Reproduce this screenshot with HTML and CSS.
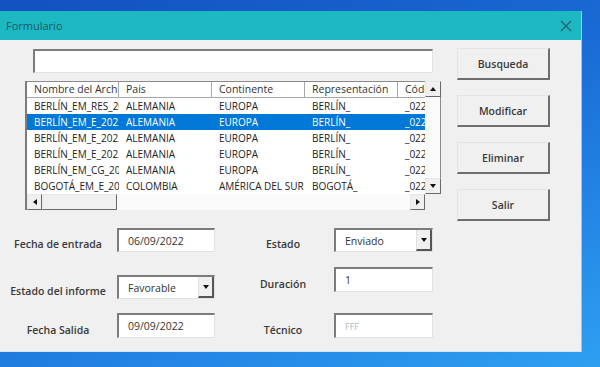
FILE: index.html
```html
<!DOCTYPE html>
<html lang="es">
<head>
    <meta charset="UTF-8">
    <meta name="viewport" content="width=device-width, initial-scale=1.0">
    <title>Formulario</title>
    <link rel="stylesheet" href="styles.css">
</head>
<body>
    <div class="window">
        <!-- Title bar -->
        <div class="titlebar">
            <span class="title">Formulario</span>
            <svg class="close" width="12" height="12" viewBox="0 0 12 12">
                <path d="M1 1 L11 11 M11 1 L1 11" stroke="#2b5f6b" stroke-width="1.3" fill="none"/>
            </svg>
        </div>

        <div class="content">
            <div class="top">
                <div class="left">
                    <div class="search"></div>

                    <!-- ListBox -->
                    <div class="list">
                        <div class="list-body">
                            <div class="row header">
                                <div class="cell">Nombre del Archivo</div>
                                <div class="cell">Pais</div>
                                <div class="cell">Continente</div>
                                <div class="cell">Representación</div>
                                <div class="cell">Código</div>
                            </div>
                            <div class="row">
                                <div class="cell">BERLÍN_EM_RES_2022</div>
                                <div class="cell">ALEMANIA</div>
                                <div class="cell">EUROPA</div>
                                <div class="cell">BERLÍN_</div>
                                <div class="cell">_022</div>
                            </div>
                            <div class="row selected">
                                <div class="cell">BERLÍN_EM_E_2022</div>
                                <div class="cell">ALEMANIA</div>
                                <div class="cell">EUROPA</div>
                                <div class="cell">BERLÍN_</div>
                                <div class="cell">_022</div>
                            </div>
                            <div class="row">
                                <div class="cell">BERLÍN_EM_E_2022</div>
                                <div class="cell">ALEMANIA</div>
                                <div class="cell">EUROPA</div>
                                <div class="cell">BERLÍN_</div>
                                <div class="cell">_022</div>
                            </div>
                            <div class="row">
                                <div class="cell">BERLÍN_EM_E_2022</div>
                                <div class="cell">ALEMANIA</div>
                                <div class="cell">EUROPA</div>
                                <div class="cell">BERLÍN_</div>
                                <div class="cell">_022</div>
                            </div>
                            <div class="row">
                                <div class="cell">BERLÍN_EM_CG_2022</div>
                                <div class="cell">ALEMANIA</div>
                                <div class="cell">EUROPA</div>
                                <div class="cell">BERLÍN_</div>
                                <div class="cell">_022</div>
                            </div>
                            <div class="row">
                                <div class="cell">BOGOTÁ_EM_E_2022</div>
                                <div class="cell">COLOMBIA</div>
                                <div class="cell">AMÉRICA DEL SUR</div>
                                <div class="cell">BOGOTÁ_</div>
                                <div class="cell">_022</div>
                            </div>
                        </div>

                        <div class="vscroll">
                            <div class="sbtn"><span class="arrow up"></span></div>
                            <div class="track"></div>
                            <div class="sbtn"><span class="arrow down"></span></div>
                        </div>

                        <div class="hscroll">
                            <div class="sbtn"><span class="arrow left"></span></div>
                            <div class="thumb"></div>
                            <div class="track"></div>
                            <div class="sbtn"><span class="arrow right"></span></div>
                        </div>

                        <div class="corner"></div>
                    </div>
                </div>

                <div class="buttons">
                    <div class="btn">Busqueda</div>
                    <div class="btn">Modificar</div>
                    <div class="btn">Eliminar</div>
                    <div class="btn">Salir</div>
                </div>
            </div>

            <!-- Form fields -->
            <div class="form">
                <div class="group group-left">
                    <div class="field">
                        <div class="label">Fecha de entrada</div>
                        <div class="input">06/09/2022</div>
                    </div>
                    <div class="field">
                        <div class="label">Estado del informe</div>
                        <div class="input combo">
                            <span>Favorable</span>
                            <div class="drop"><span class="arrow down"></span></div>
                        </div>
                    </div>
                    <div class="field">
                        <div class="label">Fecha Salida</div>
                        <div class="input">09/09/2022</div>
                    </div>
                </div>

                <div class="group group-right">
                    <div class="field">
                        <div class="label">Estado</div>
                        <div class="input combo">
                            <span>Enviado</span>
                            <div class="drop"><span class="arrow down"></span></div>
                        </div>
                    </div>
                    <div class="field">
                        <div class="label">Duración</div>
                        <div class="input">1</div>
                    </div>
                    <div class="field">
                        <div class="label">Técnico</div>
                        <div class="input muted">FFF</div>
                    </div>
                </div>
            </div>
        </div>
    </div>
</body>
</html>
```

FILE: styles.css
```css
body {
    margin: 0;
    width: 600px;
    height: 367px;
    overflow: hidden;
    font-family: "Open Sans", "Liberation Sans", sans-serif;
    background: linear-gradient(160deg, #1350c0 0%, #1a6cd6 45%, #2488e6 75%, #2ea0f0 100%);
    padding-top: 11px;
    box-sizing: border-box;
}
.window {
    width: 582px;
    height: 341px;
    background-color: #f0f0f0;
    border-right: 1px solid #9cc4e4;
    border-bottom: 1px solid #d8e6f2;
    box-sizing: border-box;
}
.titlebar {
    height: 29px;
    background-color: #1cb9c3;
    display: flex;
    align-items: center;
    justify-content: space-between;
    padding: 0 9px 0 6px;
}
.title {
    font-size: 11px;
    color: #1c5868;
}
.content {
    padding-top: 9px;
}
.top {
    display: flex;
    align-items: flex-start;
    height: 161px;
    margin-left: 25px;
}
.left {
    width: 416px;
}
.search {
    margin-left: 8px;
    width: 400px;
    height: 24px;
    box-sizing: border-box;
    background-color: white;
    border-top: 2px solid #7c7c7c;
    border-left: 2px solid #7c7c7c;
    border-right: 1px solid #e2e2e2;
    border-bottom: 1px solid #e2e2e2;
}

/* ListBox */
.list {
    margin-top: 8px;
    width: 416px;
    height: 129px;
    box-sizing: border-box;
    display: grid;
    grid-template-columns: 398px 16px;
    grid-template-rows: 113px 16px;
    border-left: 2px solid #7c7c7c;
    background-color: white;
}
.list-body {
    overflow: hidden;
}
.row {
    display: grid;
    grid-template-columns: 92px 93px 93px 93px 93px;
    height: 16px;
    font-size: 10px;
    font-weight: 500;
    color: #222;
}
.row.header {
    height: 17px;
    box-sizing: border-box;
    border-top: 1px solid #8a8a8a;
    border-bottom: 1px solid #a8a8a8;
    color: #333;
    font-size: 10.5px;
    font-weight: 400;
}
.row.header .cell {
    border-right: 1px solid #a8a8a8;
    line-height: 15px;
}
.row.selected {
    background-color: #0078d7;
    color: white;
}
.cell {
    overflow: hidden;
    white-space: nowrap;
    padding-left: 7px;
    padding-right: 2px;
    line-height: 16px;
    box-sizing: border-box;
}
.vscroll {
    display: flex;
    flex-direction: column;
    border-right: 1px solid #8a8a8a;
}
.hscroll {
    display: flex;
}
.track {
    flex: 1;
    background-color: #fafafa;
}
.sbtn {
    width: 16px;
    height: 16px;
    box-sizing: border-box;
    background-color: #f0f0f0;
    border: 1px solid;
    border-color: #e8e8e8 #6a6a6a #6a6a6a #e8e8e8;
    display: flex;
    align-items: center;
    justify-content: center;
}
.hscroll .sbtn {
    width: 15px;
}
.thumb {
    width: 75px;
    box-sizing: border-box;
    background-color: #f0f0f0;
    border: 1px solid;
    border-color: #e8e8e8 #6a6a6a #6a6a6a #e8e8e8;
}
.corner {
    background-color: #f0f0f0;
}
.arrow {
    width: 0;
    height: 0;
    border-style: solid;
}
.arrow.up {
    border-width: 0 3.5px 4px 3.5px;
    border-color: transparent transparent #111 transparent;
}
.arrow.down {
    border-width: 4px 3.5px 0 3.5px;
    border-color: #111 transparent transparent transparent;
}
.arrow.left {
    border-width: 3.5px 4px 3.5px 0;
    border-color: transparent #111 transparent transparent;
}
.arrow.right {
    border-width: 3.5px 0 3.5px 4px;
    border-color: transparent transparent transparent #111;
}

/* Buttons */
.buttons {
    margin-left: 16px;
    margin-top: -1px;
    display: flex;
    flex-direction: column;
    gap: 15px;
}
.btn {
    width: 93px;
    height: 32px;
    box-sizing: border-box;
    background-color: #f0f0f0;
    border-top: 1px solid #e4e4e4;
    border-left: 1px solid #e4e4e4;
    border-right: 2px solid #6e6e6e;
    border-bottom: 2px solid #6e6e6e;
    display: flex;
    align-items: center;
    justify-content: center;
    font-size: 10.5px;
    font-weight: 600;
    color: #3a3a3a;
}

/* Form */
.form {
    display: flex;
    margin-top: 18px;
}
.group {
    display: flex;
    flex-direction: column;
}
.group-left {
    margin-left: 10px;
}
.group-right {
    margin-left: 33px;
}
.field {
    display: flex;
    align-items: center;
    height: 24px;
}
.group-left .field:nth-child(2) {
    margin-top: 23px;
}
.group-left .field:nth-child(3) {
    margin-top: 14px;
    height: 25px;
}
.group-right .field:nth-child(2) {
    margin-top: 15px;
    height: 25px;
}
.group-right .field:nth-child(3) {
    margin-top: 21px;
    height: 25px;
}
.label {
    width: 96px;
    text-align: center;
    padding-top: 8px;
    font-size: 10.5px;
    font-weight: 600;
    color: #3a3a3a;
}
.group-right .label {
    width: 70px;
}
.input {
    margin-left: 11px;
    width: 98px;
    height: 100%;
    box-sizing: border-box;
    background-color: white;
    border-top: 2px solid #7c7c7c;
    border-left: 2px solid #7c7c7c;
    border-right: 1px solid #e2e2e2;
    border-bottom: 1px solid #e2e2e2;
    padding-left: 9px;
    font-size: 10.5px;
    color: #333;
    display: flex;
    align-items: center;
}
.group-right .input {
    margin-left: 16px;
    width: 99px;
}
.input.muted {
    color: #b8b8b8;
    font-size: 9px;
}
.combo {
    justify-content: space-between;
    padding-right: 0;
}
.drop {
    width: 16px;
    height: 100%;
    box-sizing: border-box;
    background-color: #f0f0f0;
    border-left: 1px solid #e0e0e0;
    border-right: 2px solid #555;
    border-bottom: 2px solid #555;
    display: flex;
    align-items: center;
    justify-content: center;
}
```
